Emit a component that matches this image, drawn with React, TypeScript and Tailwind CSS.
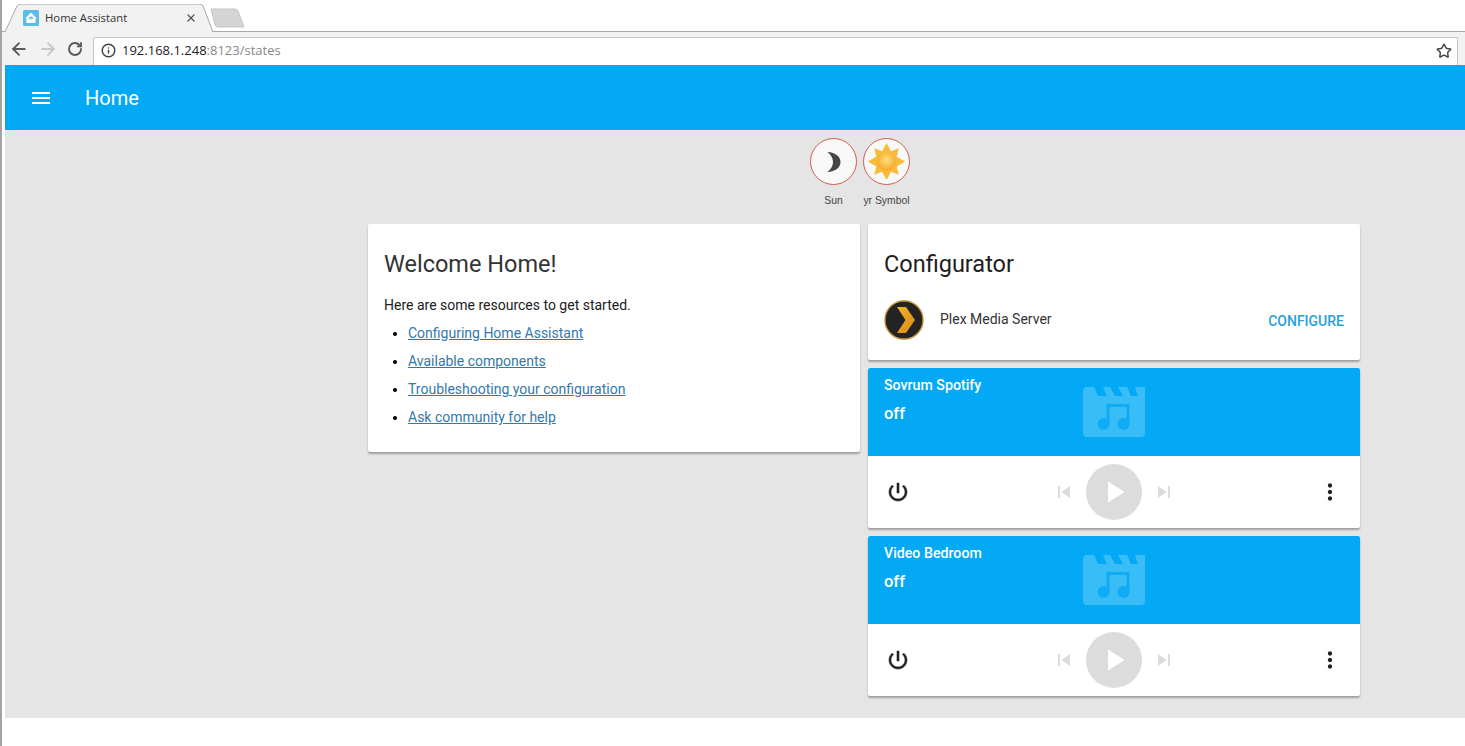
import { ArrowLeft, ArrowRight, Info, RotateCw, Star, X } from "lucide-react";
import type { ReactNode } from "react";

const PATHS = {
  menu: "M3 18h18v-2H3v2zm0-5h18v-2H3v2zm0-7v2h18V6H3z",
  power:
    "M13 3h-2v10h2V3zm4.83 2.17l-1.42 1.42C17.99 7.86 19 9.81 19 12c0 3.87-3.13 7-7 7s-7-3.13-7-7c0-2.19 1.01-4.14 2.58-5.42L6.17 5.17C4.23 6.82 3 9.26 3 12c0 4.97 4.03 9 9 9s9-4.03 9-9c0-2.74-1.23-5.18-3.17-6.83z",
  prev: "M6 6h2v12H6zm3.5 6l8.5 6V6z",
  next: "M6 18l8.5-6L6 6v12zM16 6v12h2V6h-2z",
  play: "M8 5v14l11-7z",
  more: "M12 8c1.1 0 2-.9 2-2s-.9-2-2-2-2 .9-2 2 .9 2 2 2zm0 2c-1.1 0-2 .9-2 2s.9 2 2 2 2-.9 2-2-.9-2-2-2zm0 6c-1.1 0-2 .9-2 2s.9 2 2 2 2-.9 2-2-.9-2-2-2z",
};

function Icon({ d, className }: { d: string; className: string }) {
  return (
    <svg viewBox="0 0 24 24" fill="currentColor" className={className}>
      <path d={d} />
    </svg>
  );
}

function TabStrip() {
  return (
    <div className="flex h-[32px] items-end border-b border-[#a8a8a8] pl-[3px]">
      <div className="relative -mb-px flex h-[28px] w-[208px] items-center pl-[18px] pr-[16px]">
        <svg viewBox="0 0 208 28" className="absolute inset-0 h-[28px] w-[208px]">
          <path d="M0 28 L12 2 Q13 0 16 0 L194 0 Q197 0 198 2 L208 28" fill="#f2f2f2" stroke="#a8a8a8" />
        </svg>
        <svg viewBox="0 0 16 16" className="relative h-[16px] w-[16px]">
          <rect width="16" height="16" rx="1.5" fill="#5bbce8" />
          <path d="M8 2.5 L14 8.5 H12.5 V13 H3.5 V8.5 H2 Z" fill="#fff" />
          <circle cx="8" cy="8.5" r="2" fill="#5bbce8" />
          <path d="M8 8v5M5.5 8.5 8 11l2.5-2.5" stroke="#fff" fill="none" />
        </svg>
        <span className="relative ml-[6px] flex-1 font-['Open_Sans',sans-serif] text-[11.3px] text-[#333]">Home Assistant</span>
        <X className="relative h-[12px] w-[12px] text-[#555]" strokeWidth={2.5} />
      </div>
      <svg viewBox="0 0 36 20" className="mb-[3px] -ml-[3px] h-[20px] w-[36px]">
        <path d="M1 1 H25 Q27 1 28 3 L34 19 H8 Q6 19 5 17 Z" fill="#d4d4d4" stroke="#c4c4c4" />
      </svg>
    </div>
  );
}

function Toolbar() {
  return (
    <div className="flex h-[33px] items-end bg-[#f2f2f2] pr-[7px]">
      <div className="flex h-full w-[91px] items-center pl-[7px]">
        <ArrowLeft className="h-[20px] w-[20px] text-[#5a5a5a]" strokeWidth={2.2} />
        <ArrowRight className="ml-[9px] h-[20px] w-[20px] text-[#c8c8c8]" strokeWidth={2.2} />
        <RotateCw className="ml-[9px] h-[16px] w-[16px] text-[#5a5a5a]" strokeWidth={2.8} />
      </div>
      <div className="flex h-[28px] flex-1 items-center rounded-t-[2px] border border-b-0 border-[#c4c4c4] bg-white pb-[2px] pl-[7px] pr-[5px] font-['Open_Sans',sans-serif] text-[13px]">
        <Info className="h-[15px] w-[15px] text-[#444]" strokeWidth={2.4} />
        <span className="ml-[6px] text-[#222]">192.168.1.248</span>
        <span className="text-[#888]">:8123/states</span>
        <Star className="ml-auto h-[16px] w-[16px] text-[#444]" strokeWidth={2.2} />
      </div>
    </div>
  );
}

function MoonBadge() {
  return (
    <svg viewBox="0 0 24 24" className="h-[24px] w-[24px]">
      <path d="M5.500 2 C13.500 2.500 18.500 6.500 18.500 12 C18.500 17.500 13.500 21.500 5.500 22 C9.500 18.500 11 15.500 11 12 C11 8.500 9.500 5.500 5.500 2 Z" fill="#454545" />
    </svg>
  );
}

function SunBadge() {
  return (
    <svg viewBox="0 0 40 40" className="h-[39px] w-[39px]">
      <defs>
        <radialGradient id="sunCore" cx="0.5" cy="0.42" r="0.6">
          <stop offset="0" stopColor="#ffdf80" />
          <stop offset="1" stopColor="#f4a622" />
        </radialGradient>
      </defs>
      <path
        d="M20 1 L24.500 9.500 L32.500 6.500 L30.500 15 L39 20 L30.500 25 L32.500 33.500 L24.500 30.500 L20 39 L15.500 30.500 L7.500 33.500 L9.500 25 L1 20 L9.500 15 L7.500 6.500 L15.500 9.500 Z"
        fill="#f8bb3a"
      />
      <circle cx="20" cy="20" r="9.500" fill="url(#sunCore)" />
    </svg>
  );
}

function Badge({ label, children, className = "" }: { label: string; children: ReactNode; className?: string }) {
  return (
    <div className={`flex w-[47px] flex-col items-center ${className}`}>
      <div className="flex h-[47px] w-[47px] items-center justify-center rounded-full border border-[#cf5f4c] bg-[#f8f8f8]">
        {children}
      </div>
      <span className="mt-[10px] whitespace-nowrap font-['Liberation_Sans',sans-serif] text-[10.4px] leading-[12px] text-[#444]">{label}</span>
    </div>
  );
}

function PlexLogo() {
  return (
    <svg viewBox="0 0 40 40" className="h-[40px] w-[40px]">
      <defs>
        <linearGradient id="plexGold" x1="0" y1="0" x2="1" y2="1">
          <stop offset="0" stopColor="#f3b32c" />
          <stop offset="1" stopColor="#d98a12" />
        </linearGradient>
      </defs>
      <circle cx="20" cy="20" r="19" fill="#232323" stroke="#b98a2e" strokeWidth="1.4" />
      <path d="M13 7 H22 L31 20 L22 33 H13 L21.5 20 Z" fill="url(#plexGold)" />
    </svg>
  );
}

function MediaArt() {
  return (
    <svg viewBox="0 0 62 50" className="h-[50px] w-[62px]">
      <path
        d="M0 4 Q0 0 4 0 H11 L15 9 H24 L20 0 H27 L32 9 H40 L35 0 H44 L48 9 H55 L52 0 H62 V46 Q62 50 58 50 H4 Q0 50 0 46 Z"
        fill="#38bdf6"
      />
      <path d="M25 37 V18.500 H45 V37" fill="none" stroke="#0fabf4" strokeWidth="3" />
      <circle cx="20.500" cy="37" r="6" fill="#0fabf4" />
      <circle cx="40.500" cy="37" r="6" fill="#0fabf4" />
    </svg>
  );
}

function MediaCard({ name }: { name: string }) {
  return (
    <div className="overflow-hidden rounded-[2px] bg-white shadow-[0_2px_2px_rgba(0,0,0,0.3)]">
      <div className="flex h-[88px] bg-[#03a9f4] pl-[16px] pt-[8px] text-white">
        <div className="w-[199px]">
          <div className="text-[14.2px] font-medium leading-[18px]">{name}</div>
          <div className="mt-[9px] text-[16.5px] font-medium leading-[22px]">off</div>
        </div>
        <div className="pt-[11px]">
          <MediaArt />
        </div>
      </div>
      <div className="flex h-[72px] items-center pl-[18px] pr-[18px] text-[#212121]">
        <svg viewBox="0 0 24 24" fill="currentColor" stroke="currentColor" strokeWidth="0.6" className="h-[24px] w-[24px]">
          <path d={PATHS.power} />
        </svg>
        <div className="flex flex-1 items-center justify-center gap-[10px] text-[#dcdcdc]">
          <Icon d={PATHS.prev} className="h-[24px] w-[24px]" />
          <div className="flex h-[56px] w-[56px] items-center justify-center rounded-full bg-[#dcdcdc]">
            <Icon d={PATHS.play} className="h-[36px] w-[36px] text-white" />
          </div>
          <Icon d={PATHS.next} className="h-[24px] w-[24px]" />
        </div>
        <Icon d={PATHS.more} className="-mx-px h-[26px] w-[26px]" />
      </div>
    </div>
  );
}

const links = [
  "Configuring Home Assistant",
  "Available components",
  "Troubleshooting your configuration",
  "Ask community for help",
];

export default function App() {
  return (
    <div className="flex h-[746px] w-[1465px] flex-col overflow-hidden border-l-2 border-[#a4a4a4] bg-white font-['Roboto',sans-serif]">
      <TabStrip />
      <Toolbar />
      <div className="ml-[3px] flex h-[653px] flex-col bg-[#e5e5e5]">
        <header className="flex h-[65px] items-center bg-[#03a9f4] pl-[24px] text-white">
          <Icon d={PATHS.menu} className="h-[24px] w-[24px]" />
          <h1 className="ml-[32px] text-[20px] leading-[28px]">Home</h1>
        </header>

        <div className="flex pl-[805px] pt-[8px]">
          <Badge label="Sun">
            <MoonBadge />
          </Badge>
          <Badge label="yr Symbol" className="ml-[6px]">
            <SunBadge />
          </Badge>
        </div>

        <div className="mt-[17px] flex items-start gap-[8px] pl-[363px]">
          <section className="h-[228px] w-[492px] rounded-[2px] bg-white px-[16px] pt-[24px] shadow-[0_2px_2px_rgba(0,0,0,0.3)]">
            <h2 className="text-[23.5px] leading-[32px] text-[#333]">Welcome Home!</h2>
            <p className="mt-[15px] text-[14px] leading-[20px] text-[#212121]">Here are some resources to get started.</p>
            <ul className="ml-[24px] list-disc text-[14px] leading-[20px]">
              {links.map((link) => (
                <li key={link} className="mt-[8px]">
                  <a href="#" className="text-[#3079b0] underline">{link}</a>
                </li>
              ))}
            </ul>
          </section>

          <div className="flex w-[492px] flex-col gap-[8px]">
            <section className="h-[136px] rounded-[2px] bg-white px-[16px] pt-[24px] shadow-[0_2px_2px_rgba(0,0,0,0.3)]">
              <h2 className="text-[23.5px] leading-[32px] text-[#212121]">Configurator</h2>
              <div className="mt-[20px] flex items-center">
                <PlexLogo />
                <span className="ml-[16px] -translate-y-[1px] text-[14px] text-[#333]">Plex Media Server</span>
                <span className="ml-auto translate-y-[1px] text-[14px] font-medium text-[#2b9fd8]">CONFIGURE</span>
              </div>
            </section>
            <MediaCard name="Sovrum Spotify" />
            <MediaCard name="Video Bedroom" />
          </div>
        </div>
      </div>
    </div>
  );
}
